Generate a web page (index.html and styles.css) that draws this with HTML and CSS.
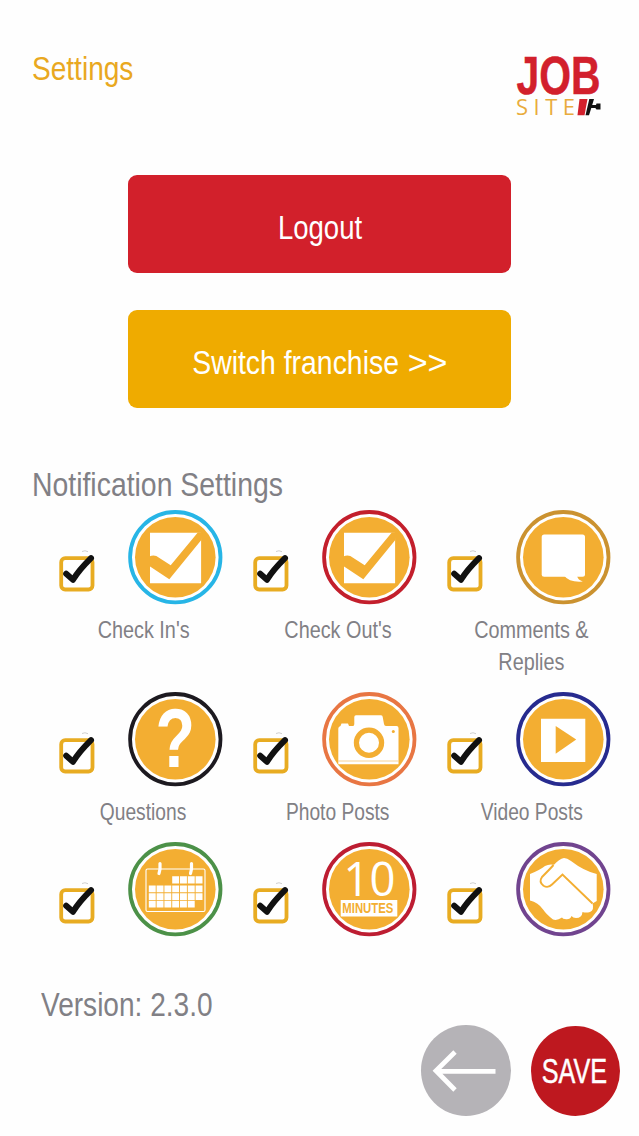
FILE: index.html
```
<!DOCTYPE html>
<html lang="en">
<head>
<meta charset="utf-8">
<title>Settings</title>
<link rel="stylesheet" href="styles.css">
</head>
<body>
<svg class="defs" width="0" height="0" aria-hidden="true">
  <symbol id="tick" viewBox="0 0 40 44">
    <path d="M25 2.5q3-1.6 6 .2" fill="none" stroke="#bbb" stroke-width=".7"/>
    <rect x="4.2" y="9.2" width="31.3" height="31.3" rx="4" fill="#fff" stroke="#e8ac22" stroke-width="3.8"/>
    <path d="M9.2 24.8L16 30.8Q22 21 34 9.200" fill="none" stroke="#111" stroke-width="6" stroke-linecap="round" stroke-linejoin="round"/>
  </symbol>
  <symbol id="checked" viewBox="0 0 95 94">
    <path d="M22 22.7H73.1V73.3H22z" fill="#fff"/>
    <path d="M21.3 46.5Q25 44.8 28.3 46L42.7 55.3L69.8 22.5L75 22L73.5 29.7L41.3 69.2L21.3 56z" fill="#f3ae32"/>
  </symbol>
</svg>

<main class="screen">
  <header class="top">
    <h1 class="title"><span class="narrow left">Settings</span></h1>
    <svg class="logo" viewBox="0 0 88 64" role="img" aria-label="Job Site">
      <text x="1.500" y="41" class="logo-job" textLength="84" lengthAdjust="spacingAndGlyphs">JOB</text>
      <text class="logo-site" x="1" y="62.3" textLength="59">SITE</text>
      <path d="M64.500 46H72.500L69.500 62.3H62.500z" fill="#d2202c"/>
      <path d="M74.300 46H79L77.200 52H81L81.500 50.5H85.500V56.5H81.500L80.300 55H76.300L74 62.3H70.5z" fill="#111"/>
    </svg>
  </header>

  <div class="actions">
    <button class="action logout"><span class="narrow">Logout</span></button>
    <button class="action switch"><span class="narrow">Switch franchise <span class="arrows">&gt;&gt;</span></span></button>
  </div>

  <h2 class="section"><span class="narrow left">Notification Settings</span></h2>

  <div class="grid">
    <div class="cell">
      <div class="icons">
        <svg class="box"><use href="#tick"/></svg>
        <svg class="badge" viewBox="0 0 95 94"><circle class="ring" cx="47.3" cy="47.2" r="45.2" stroke="#27b5e6"/><circle class="disc" cx="47.3" cy="47.2" r="40.3"/><use href="#checked"/></svg>
      </div>
      <p class="label"><span class="narrow">Check In's</span></p>
    </div>
    <div class="cell">
      <div class="icons">
        <svg class="box"><use href="#tick"/></svg>
        <svg class="badge" viewBox="0 0 95 94"><circle class="ring" cx="47.3" cy="47.2" r="45.2" stroke="#c31f2c"/><circle class="disc" cx="47.3" cy="47.2" r="40.3"/><use href="#checked"/></svg>
      </div>
      <p class="label"><span class="narrow">Check Out's</span></p>
    </div>
    <div class="cell">
      <div class="icons">
        <svg class="box"><use href="#tick"/></svg>
        <svg class="badge" viewBox="0 0 95 94"><circle class="ring" cx="47.3" cy="47.2" r="45.2" stroke="#cb9230"/><circle class="disc" cx="47.3" cy="47.2" r="40.3"/>
          <rect x="25.7" y="24.5" width="43.3" height="42.2" rx="2.5" fill="#fff"/>
          <path d="M48.500 66Q53 72.500 66.800 71.500Q62 70 61 66z" fill="#fff"/>
        </svg>
      </div>
      <p class="label"><span class="narrow">Comments &amp;<br>Replies</span></p>
    </div>

    <div class="cell">
      <div class="icons">
        <svg class="box"><use href="#tick"/></svg>
        <svg class="badge" viewBox="0 0 95 94"><circle class="ring" cx="47.3" cy="47.2" r="45.2" stroke="#1d1a20"/><circle class="disc" cx="47.3" cy="47.2" r="40.3"/>
          <text class="question" x="27.6" y="75" textLength="39.500" lengthAdjust="spacingAndGlyphs">?</text>
        </svg>
      </div>
      <p class="label tight"><span class="narrow">Questions</span></p>
    </div>
    <div class="cell">
      <div class="icons">
        <svg class="box"><use href="#tick"/></svg>
        <svg class="badge" viewBox="0 0 95 94"><circle class="ring" cx="47.3" cy="47.2" r="45.2" stroke="#e87643"/><circle class="disc" cx="47.3" cy="47.2" r="40.3"/>
          <path d="M16.300 36.500Q16.300 34.500 18.500 34L19.500 31.500H26L27 34H31Q32.300 34 32.300 32V25Q32.300 23.300 34 23.300H59Q60.700 23.300 60.700 25L62 32Q62.300 34 64 34H74.500Q76.500 34 76.500 36V72.300H16.300z" fill="#fff"/>
          <path d="M16.300 69H76.500" stroke="#f5c878" stroke-width=".8"/>
          <circle cx="47" cy="50.700" r="12.600" fill="#fff" stroke="#f3ae32" stroke-width="5.200"/>
          <circle cx="71.300" cy="39.500" r="1.500" fill="#f3ae32"/>
        </svg>
      </div>
      <p class="label tight"><span class="narrow">Photo Posts</span></p>
    </div>
    <div class="cell">
      <div class="icons">
        <svg class="box"><use href="#tick"/></svg>
        <svg class="badge" viewBox="0 0 95 94"><circle class="ring" cx="47.3" cy="47.2" r="45.2" stroke="#272b8f"/><circle class="disc" cx="47.3" cy="47.2" r="40.3"/>
          <path d="M25 26.700H69.300V70H25z" fill="#fff"/>
          <path d="M39.700 34L60.200 47.500L39.700 61.700z" fill="#f3ae32"/>
        </svg>
      </div>
      <p class="label tight"><span class="narrow">Video Posts</span></p>
    </div>

    <div class="cell">
      <div class="icons">
        <svg class="box"><use href="#tick"/></svg>
        <svg class="badge" viewBox="0 0 95 94"><circle class="ring" cx="47.3" cy="47.2" r="45.2" stroke="#4c9148"/><circle class="disc" cx="47.3" cy="47.2" r="40.3"/>
          <rect x="18" y="27" width="59" height="42.500" rx="1.500" fill="none" stroke="#fff" stroke-width="1.100"/>
          <path d="M32 21.500V27L31 31.500M63.500 21.500V27L62.500 31.500" fill="none" stroke="#fff" stroke-width="3.200" stroke-linecap="round"/>
          <path d="M44.200 37.800H74.500" stroke="#fff" stroke-width="7.200" stroke-dasharray="6.900 .9"/>
          <path d="M20.800 46.900H74.500M20.800 54.600H74.500" stroke="#fff" stroke-width="6.600" stroke-dasharray="6.900 .9"/>
          <path d="M20.800 62.100H66.700" stroke="#fff" stroke-width="6.900" stroke-dasharray="6.900 .9"/>
        </svg>
      </div>
    </div>
    <div class="cell">
      <div class="icons">
        <svg class="box"><use href="#tick"/></svg>
        <svg class="badge" viewBox="0 0 95 94"><circle class="ring" cx="47.3" cy="47.2" r="45.2" stroke="#bd1d32"/><circle class="disc" cx="47.3" cy="47.2" r="40.3"/>
          <text class="ten" x="21.500" y="54" textLength="52" lengthAdjust="spacingAndGlyphs">10</text>
          <path d="M18.700 58H75.300V74.500H18.700z" fill="#fff"/>
          <text class="minutes" x="20.300" y="71.200" textLength="51" lengthAdjust="spacingAndGlyphs">MINUTES</text>
        </svg>
      </div>
    </div>
    <div class="cell">
      <div class="icons">
        <svg class="box"><use href="#tick"/></svg>
        <svg class="badge" viewBox="0 0 95 94"><circle class="ring" cx="47.3" cy="47.2" r="45.2" stroke="#71448f"/><circle class="disc" cx="47.3" cy="47.2" r="40.3"/>
          <path d="M14 32Q24 28 29 24Q33 21.800 38 22.800Q43 17 48 16Q51 16 55 19Q68 29 80.700 32V59L76.500 61.500Q78.500 68 74 70Q70 71 66.500 70Q66 76 60 76Q57 76 55.500 74Q54 78 49 77Q47 77 46 75.500Q41 79 37 77.500Q30 72 27.500 68Q22 60 14 58.500z" fill="#fff"/>
          <path d="M37.500 23Q34 27 26 35Q22.500 40 27.500 43.800Q32 46.500 36 42.500L46.500 32.500L76.500 61.500" fill="none" stroke="#f3ae32" stroke-width="1.900"/>
        </svg>
      </div>
    </div>
  </div>

  <footer class="bottom">
    <p class="version"><span class="narrow left">Version: 2.3.0</span></p>
    <div class="nav">
      <button class="round back" aria-label="Back">
        <svg viewBox="0 0 90 91" width="90" height="91"><path d="M15 46.300H74.500M34 27L15 45.700L34 65" fill="none" stroke="#fff" stroke-width="4.800"/></svg>
      </button>
      <button class="round save"><span class="narrow">SAVE</span></button>
    </div>
  </footer>
</main>
</body>
</html>
```
FILE: styles.css
```
* { box-sizing: border-box; }

body {
  margin: 0;
  background: #fefefe;
  font-family: "Liberation Sans", Arial, sans-serif;
  color: #818085;
}

h1, h2, p { margin: 0; font-weight: 400; }
button { border: 0; padding: 0; font: inherit; color: #fff; }
svg { overflow: visible; }
.defs { display: block; height: 0; }

.screen {
  width: 639px;
  height: 1136px;
  overflow: hidden;
  display: flex;
  flex-direction: column;
}

/* Condensed lettering */
.narrow { display: inline-block; transform: scaleX(.825); white-space: nowrap; }
.narrow.left { transform-origin: left center; }

.top {
  display: flex;
  justify-content: space-between;
  padding: 48px 36px 0 32px;
  height: 175px;
}
.title { font-size: 34px; line-height: 40px; color: #e9a820; }
.logo { width: 88px; height: 64px; margin-top: 5px; }
.logo-job { font-size: 54px; font-weight: 700; fill: #d2202c; stroke: #d2202c; stroke-width: .5px; }
.logo-site { font-size: 22px; fill: #e9ac3c; font-family: "Open Sans", sans-serif; }

.actions { display: flex; flex-direction: column; align-items: center; gap: 37px; }
.action {
  width: 383px;
  height: 98px;
  padding-top: 7px;
  border-radius: 9px;
  font-size: 34px;
}
.logout { background: #d2202b; }
.logout .narrow { transform: scaleX(.81); }
.switch { background: #efab00; }
.switch .narrow { transform: scaleX(.835); }
.arrows { display: inline-block; transform: scaleX(1.2); margin: 0 4px 0 5px; }

.section { margin: 57px 0 7px 32px; font-size: 34px; line-height: 38px; }
.section .narrow { transform: scaleX(.835); }

.grid {
  display: grid;
  grid-template-columns: repeat(3, 194px);
  grid-template-rows: 181.5px 150px 94px;
  padding-left: 46px;
}
.icons { display: flex; padding-left: 11px; gap: 31px; }
.box { width: 40px; height: 44px; margin-top: 39px; }
.badge { width: 95px; height: 94px; }
.ring { fill: #fff; stroke-width: 3.8; }
.disc { fill: #f3ae32; }
.label { margin-top: 10px; padding-left: 1px; font-size: 24px; line-height: 32px; text-align: center; }
.label.tight .narrow { transform: scaleX(.8); }

.question { font-size: 84px; font-weight: 700; fill: #fff; }
.ten { font-family: "Open Sans", sans-serif; font-size: 47px; fill: #fff; }
.minutes { font-size: 14.5px; font-weight: 700; fill: #f3ae32; }

.bottom { padding: 48px 19px 0 41px; }
.version { font-size: 34px; line-height: 40px; }
.nav { display: flex; justify-content: flex-end; gap: 20px; margin-top: 1.5px; }
.round { width: 90px; height: 91px; border-radius: 50%; flex: none; }
.round svg { display: block; }
.back { background: #b5b3b7; }
.save { width: 89px; height: 90px; background: #be181f; font-size: 35px; display: flex; align-items: center; justify-content: center; padding-right: 2px; margin-top: 1px; }
.save .narrow { transform: scaleX(.72); -webkit-text-stroke: .5px #fff; }
```
